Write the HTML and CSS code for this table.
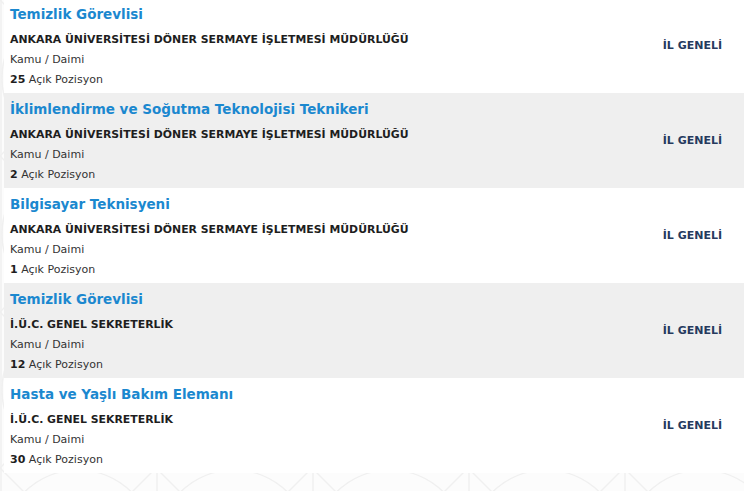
FILE: index.html
```html
<!DOCTYPE html>
<html lang="tr">
<head>
<meta charset="utf-8">
<title>İlanlar</title>
<link rel="stylesheet" href="styles.css">
</head>
<body>
<div class="list">
  <div class="row">
    <div class="info">
      <a class="title">Temizlik Görevlisi</a>
      <div class="org">ANKARA ÜNİVERSİTESİ DÖNER SERMAYE İŞLETMESİ MÜDÜRLÜĞÜ</div>
      <div class="type">Kamu / Daimi</div>
      <div class="count"><b>25</b> Açık Pozisyon</div>
    </div>
    <div class="place">İL GENELİ</div>
  </div>
  <div class="row alt">
    <div class="info">
      <a class="title">İklimlendirme ve Soğutma Teknolojisi Teknikeri</a>
      <div class="org">ANKARA ÜNİVERSİTESİ DÖNER SERMAYE İŞLETMESİ MÜDÜRLÜĞÜ</div>
      <div class="type">Kamu / Daimi</div>
      <div class="count"><b>2</b> Açık Pozisyon</div>
    </div>
    <div class="place">İL GENELİ</div>
  </div>
  <div class="row">
    <div class="info">
      <a class="title">Bilgisayar Teknisyeni</a>
      <div class="org">ANKARA ÜNİVERSİTESİ DÖNER SERMAYE İŞLETMESİ MÜDÜRLÜĞÜ</div>
      <div class="type">Kamu / Daimi</div>
      <div class="count"><b>1</b> Açık Pozisyon</div>
    </div>
    <div class="place">İL GENELİ</div>
  </div>
  <div class="row alt">
    <div class="info">
      <a class="title">Temizlik Görevlisi</a>
      <div class="org">İ.Ü.C. GENEL SEKRETERLİK</div>
      <div class="type">Kamu / Daimi</div>
      <div class="count"><b>12</b> Açık Pozisyon</div>
    </div>
    <div class="place">İL GENELİ</div>
  </div>
  <div class="row">
    <div class="info">
      <a class="title">Hasta ve Yaşlı Bakım Elemanı</a>
      <div class="org">İ.Ü.C. GENEL SEKRETERLİK</div>
      <div class="type">Kamu / Daimi</div>
      <div class="count"><b>30</b> Açık Pozisyon</div>
    </div>
    <div class="place">İL GENELİ</div>
  </div>
</div>
</body>
</html>
```
FILE: styles.css
```css
html, body {
  margin: 0;
  padding: 0;
}
body {
  width: 744px;
  height: 491px;
  overflow: hidden;
  font-family: "DejaVu Sans", Verdana, sans-serif;
  background-color: #fcfcfc;
  background-image: url("data:image/svg+xml;utf8,<svg xmlns='http://www.w3.org/2000/svg' width='156' height='156'><g fill='none' stroke='%23f0f0f0' stroke-width='1.5'><path d='M0 0 L156 156 M156 0 L0 156'/><circle cx='78' cy='78' r='76'/><path d='M1 0 V156'/></g></svg>");
}
.list {
  margin: -2px 0 0 4px;
  display: flex;
  flex-direction: column;
}
.row {
  height: 95px;
  box-sizing: border-box;
  background: #ffffff;
  display: flex;
  align-items: center;
  padding: 0 22px 0 6px;
}
.row.alt {
  background: #efefef;
}
.info {
  flex: 1;
  display: flex;
  flex-direction: column;
  align-self: flex-start;
  padding-top: 6px;
}
.title {
  font-size: 13.5px;
  font-weight: bold;
  color: #1b88cf;
  line-height: 20px;
  height: 20px;
  margin-bottom: 6px;
}
.org {
  font-size: 10.9px;
  font-weight: bold;
  color: #1e1e1e;
  line-height: 20px;
}
.type {
  font-size: 11px;
  color: #333333;
  line-height: 20px;
}
.count {
  font-size: 11px;
  color: #333333;
  line-height: 20px;
}
.count b {
  color: #1e1e1e;
}
.place {
  font-size: 11px;
  font-weight: bold;
  color: #263a5e;
}
```
